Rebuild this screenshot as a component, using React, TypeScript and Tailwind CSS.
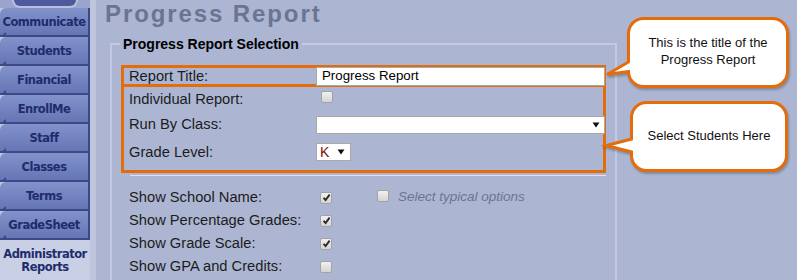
import React from 'react';

const tabs = ['Communicate', 'Students', 'Financial', 'EnrollMe', 'Staff', 'Classes', 'Terms', 'GradeSheet'];

const Check = ({ checked = false }: { checked?: boolean }) => (
  <span className="inline-flex h-[12px] w-[12px] shrink-0 items-center justify-center rounded-[2px] border border-[#a3a3a3] bg-gradient-to-b from-[#f1f1f1] to-[#d4d4d4]">
    {checked && (
      <svg width="9" height="9" viewBox="0 0 9 9">
        <path d="M1.5 4.8 L3.6 7 L7.6 1.6" fill="none" stroke="#2b2b2b" strokeWidth="1.9" />
      </svg>
    )}
  </span>
);

const Arrow = () => (
  <svg width="8" height="6" viewBox="0 0 8 6">
    <path d="M0.5 0.5 H7.5 L4 5.5 Z" fill="#111" />
  </svg>
);

export default function App() {
  return (
    <div className="relative flex h-[280px] w-[797px] overflow-hidden bg-[#acb6d2] font-['Liberation_Sans',Arial,sans-serif] text-[#1c1c1c]">
      {/* left nav */}
      <div className="flex w-[96px] shrink-0 flex-col bg-[#bec5dd]">
        <div className="flex h-[8px] w-[90px] justify-center bg-[#9aa4cc]">
          <div className="h-[8px] w-[66px] rounded-b-full border-x-2 border-b-2 border-[#b8c0de] bg-[#4d5a9c]" />
        </div>
        {tabs.map(t => (
          <div
            key={t}
            className="relative flex h-[29px] w-[90px] items-center justify-center rounded-tl-[6px] border-r-2 border-b-2 border-[#3d4987] bg-gradient-to-b from-[#8292cb] to-[#6676b5] pt-[3px] font-['DejaVu_Sans',sans-serif] text-[11.5px] font-bold tracking-[-0.5px] text-[#1f2c6c]"
          >
            <span className="absolute bottom-[-2px] left-0 h-0 w-0 border-t-[5px] border-r-[6px] border-t-transparent border-r-[#3d4987]" />
            {t}
          </div>
        ))}
        <div className="flex flex-1 w-[90px] flex-col items-center justify-center bg-[#c9cfe4] pt-[2px] font-['DejaVu_Sans',sans-serif] text-[11.5px] font-bold leading-[13px] tracking-[-0.5px] text-[#1f2c6c]">
          <span>Administrator</span>
          <span>Reports</span>
        </div>
      </div>

      {/* main */}
      <div className="flex-1 pl-[9px]">
        <h1 className="h-[28px] text-[24px] font-bold leading-[28px] tracking-[1.9px] text-[#6a7593]">Progress Report</h1>

        <fieldset className="ml-[5px] mt-[8px] w-[507px] border-2 border-b-0 border-[#c2c9e0] pb-[20px]">
          <legend className="ml-[8px] px-[3px] text-[14px] font-bold leading-[16px] text-black">Progress Report Selection</legend>

          <div className="ml-[9px] mt-[13px] w-[485px]">
            <div className="flex h-[22px] items-center border-[3px] border-[#e46c0a] pl-[5px] text-[14.7px]">
              <span className="w-[187px] shrink-0">Report Title:</span>
              <div className="relative flex h-[19px] w-[289px] shrink-0 items-center border border-[#a9a9a9] bg-white pl-[5px] text-[13.3px] text-black">
                Progress Report
              </div>
            </div>
            <div className="flex h-[86px] flex-col border-[3px] border-t-0 border-[#e46c0a] pl-[5px] pt-[2px] text-[14.7px]">
              <div className="flex h-[20px] items-center">
                <span className="w-[187px] shrink-0">Individual Report:</span>
                <span className="ml-[5px] mt-[-2px]"><Check /></span>
              </div>
              <div className="flex h-[31px] items-center">
                <span className="w-[187px] shrink-0">Run By Class:</span>
                <div className="relative flex h-[18px] w-[289px] shrink-0 items-center justify-end border border-[#a9a9a9] bg-white pr-[4px]">
                  <Arrow />
                </div>
              </div>
              <div className="flex h-[24px] items-center">
                <span className="w-[187px] shrink-0">Grade Level:</span>
                <div className="flex h-[18px] w-[35px] shrink-0 items-center gap-[8px] border border-[#a9a9a9] bg-white pl-[3px] text-[14px] text-[#7a0f0f]">
                  K
                  <Arrow />
                </div>
              </div>
            </div>
          </div>

          <div className="ml-[18px] mt-[2px] h-px w-[476px] bg-[#dfe3f1]" />

          <div className="ml-[17px] mt-[10px] flex flex-col text-[14.7px]">
            <div className="flex h-[23px] items-center">
              <span className="w-[191px] shrink-0">Show School Name:</span>
              <Check checked />
              <span className="ml-[45px]"><Check /></span>
              <span className="ml-[9px] text-[13.5px] italic text-[#6a7596]">Select typical options</span>
            </div>
            <div className="flex h-[23px] items-center">
              <span className="w-[191px] shrink-0">Show Percentage Grades:</span>
              <Check checked />
            </div>
            <div className="flex h-[23px] items-center">
              <span className="w-[191px] shrink-0">Show Grade Scale:</span>
              <Check checked />
            </div>
            <div className="flex h-[23px] items-center">
              <span className="w-[191px] shrink-0">Show GPA and Credits:</span>
              <Check />
            </div>
          </div>
        </fieldset>
      </div>

      {/* callouts */}
      <div className="absolute left-[600px] top-0 h-[180px] w-[197px]">
        <svg width="197" height="180" className="absolute left-0 top-0 drop-shadow-[1px_2px_1px_rgba(0,0,0,0.25)]">
          <path
            d="M43.5 18.5 H172.5 A15 15 0 0 1 187.5 33.5 V71.5 A15 15 0 0 1 172.5 86.5 H43.5 A15 15 0 0 1 28.5 71.5 L7 74.5 L28.5 62 V33.5 A15 15 0 0 1 43.5 18.5 Z"
            fill="#fff"
            stroke="#e46c0a"
            strokeWidth="3"
          />
          <path
            d="M46.5 102.5 H171.5 A15 15 0 0 1 186.5 117.5 V155.5 A15 15 0 0 1 171.5 170.5 H46.5 A15 15 0 0 1 31.5 155.5 V152 L6.5 145.5 L31.5 139 V117.5 A15 15 0 0 1 46.5 102.5 Z"
            fill="#fff"
            stroke="#e46c0a"
            strokeWidth="3"
          />
        </svg>
        <div className="absolute left-[30px] top-[34px] w-[156px] text-center text-[13px] leading-[17px] text-[#111]">
          This is the title of the
          <br />
          Progress Report
        </div>
        <div className="absolute left-[33px] top-[127px] w-[152px] text-center text-[13px] leading-[17px] text-[#111]">
          Select Students Here
        </div>
      </div>
    </div>
  );
}
